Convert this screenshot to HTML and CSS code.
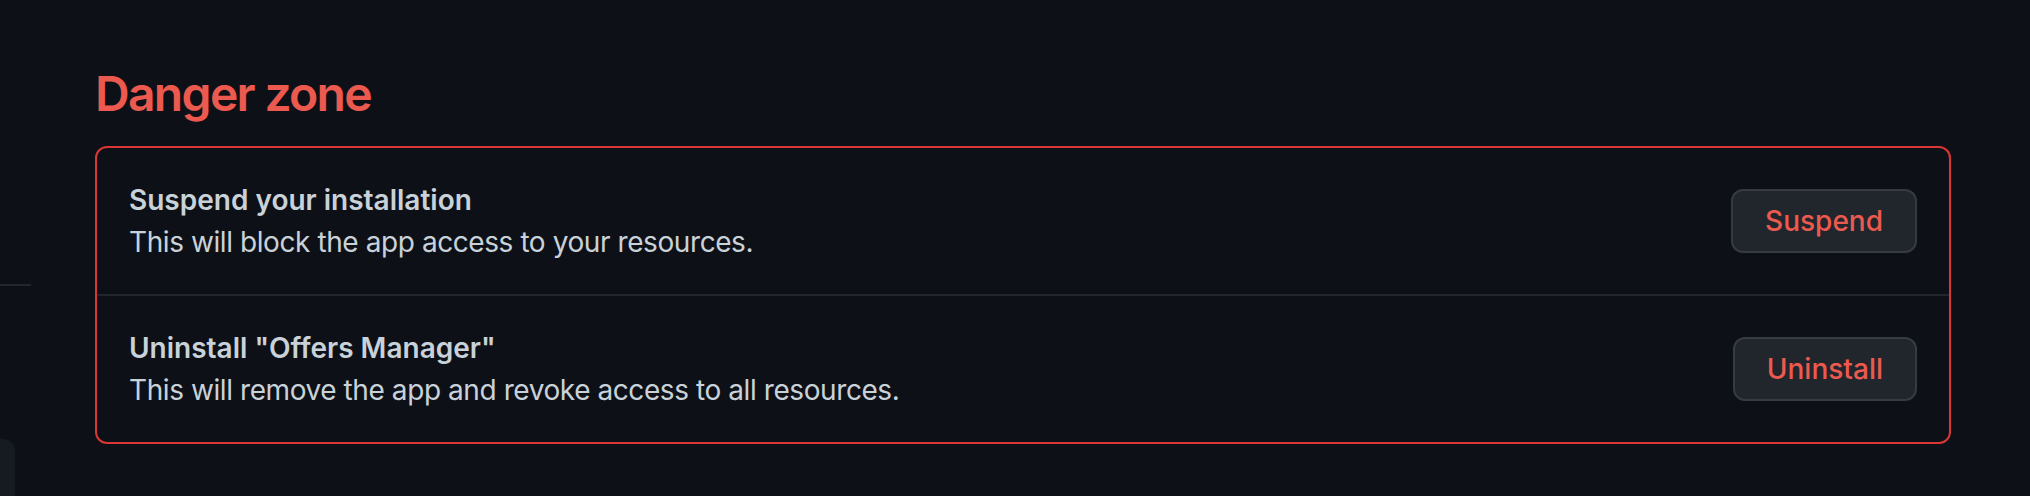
FILE: index.html
```html
<!DOCTYPE html>
<html lang="en">
<head>
  <meta charset="UTF-8">
  <title>Danger zone</title>
  <meta name="viewport" content="width=device-width, initial-scale=1.0">
  <link rel="stylesheet" href="styles.css">
</head>
<body>

  <div class="sidebar">
    <div class="sidebar-divider"></div>
    <div class="sidebar-card"></div>
  </div>

  <div class="main">
    <h2 class="subhead-danger">Danger zone</h2>

    <div class="danger-box">
      <div class="danger-row">
        <div class="row-text">
          <strong class="row-title">Suspend your installation</strong>
          <p class="row-desc">This will block the app access to your resources.</p>
        </div>
        <button class="btn-danger">Suspend</button>
      </div>
      <div class="danger-row">
        <div class="row-text">
          <strong class="row-title">Uninstall "Offers Manager"</strong>
          <p class="row-desc">This will remove the app and revoke access to all resources.</p>
        </div>
        <button class="btn-danger">Uninstall</button>
      </div>
    </div>
  </div>

</body>
</html>
```

FILE: styles.css
```css
* {
  box-sizing: border-box;
  font-family: Inter, 'Noto Sans', sans-serif;
}

body {
  margin: 0;
  padding: 0;
  display: flex;
  height: 100vh;
  background-color: #0d1117;
  color: #c9d1d9;
  overflow: hidden;
}

.sidebar {
  width: 31px;
  flex-shrink: 0;
  display: flex;
  flex-direction: column;
}

.sidebar-divider {
  margin-top: 284px;
  height: 2px;
  background-color: #21262d;
}

.sidebar-card {
  margin-top: 153px;
  width: 15px;
  flex: 1;
  background-color: #161b22;
  border-top-right-radius: 12px;
}

.main {
  flex: 1;
  padding: 64px 79px 0 64px;
}

.subhead-danger {
  margin: 0 0 22px;
  font-size: 48px;
  line-height: 60px;
  font-weight: 600;
  letter-spacing: -0.035em;
  color: #ec5a4f;
}

.danger-box {
  border: 2px solid #da3633;
  border-radius: 12px;
}

.danger-row {
  display: flex;
  align-items: center;
  padding: 31px 32px;
}

.danger-row + .danger-row {
  border-top: 2px solid #21262d;
}

.row-text {
  flex: 1;
}

.row-title {
  display: block;
  font-size: 28px;
  line-height: 42px;
  font-weight: 600;
}

.row-desc {
  margin: 0;
  font-size: 28px;
  line-height: 42px;
  letter-spacing: -0.015em;
}

.btn-danger {
  height: 64px;
  padding: 0 32px;
  font-size: 28px;
  font-weight: 500;
  color: #ec5a4f;
  background-color: #21262d;
  border: 2px solid #363b42;
  border-radius: 12px;
  cursor: pointer;
}
```
